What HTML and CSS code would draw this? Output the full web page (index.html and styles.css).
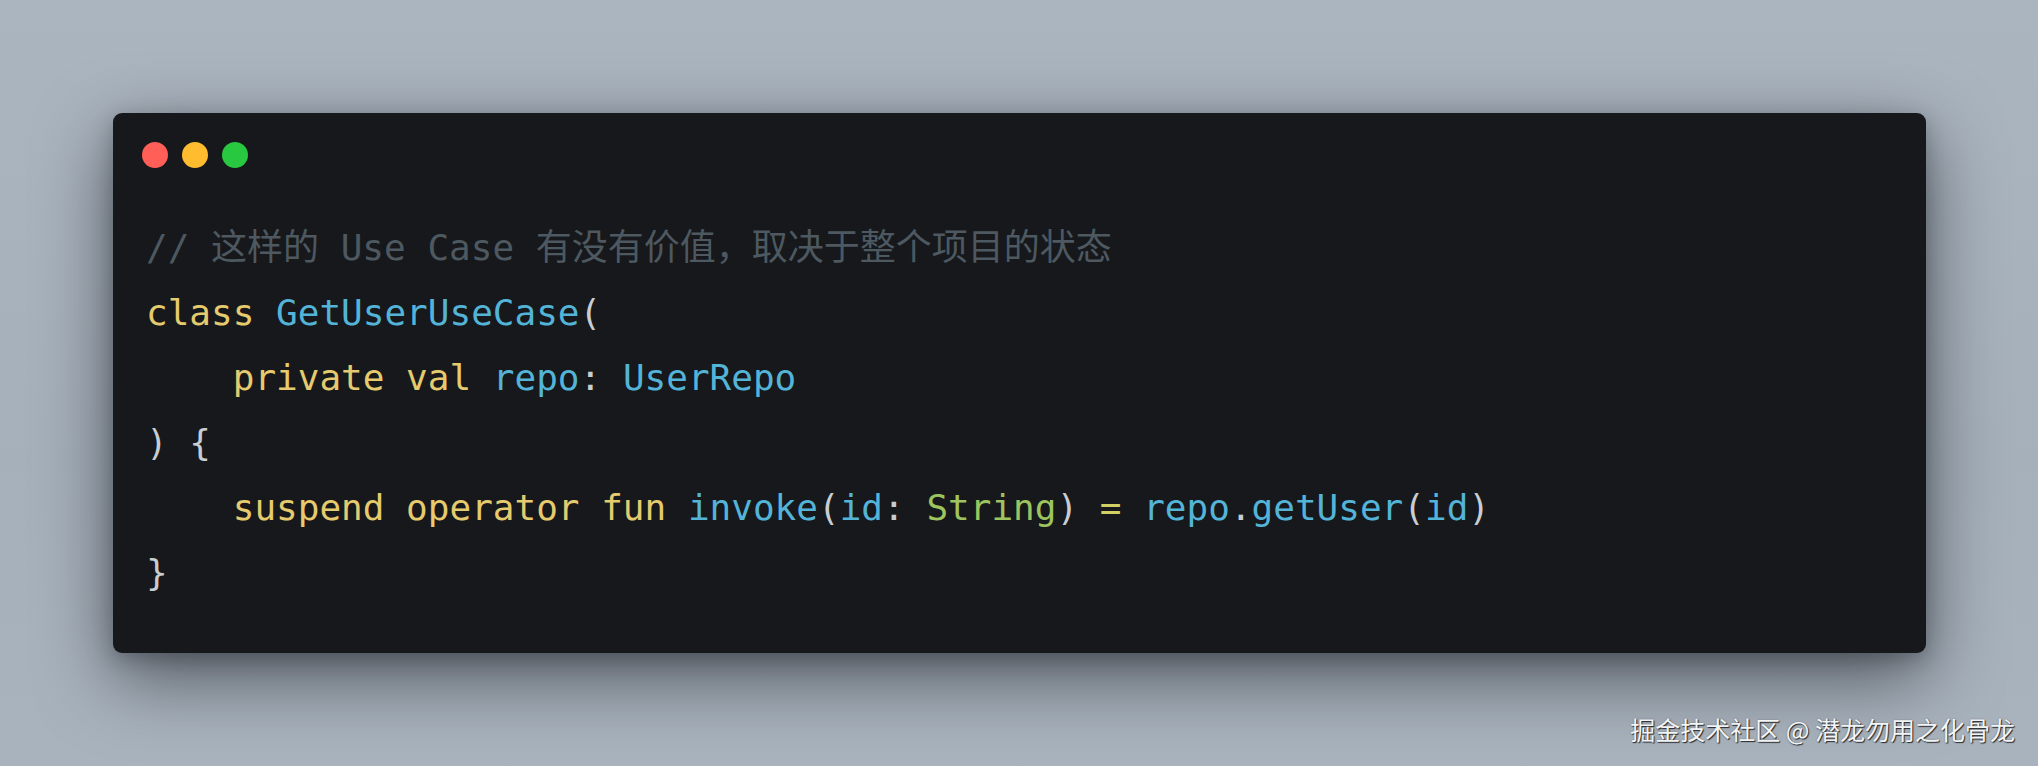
FILE: index.html
```html
<!DOCTYPE html>
<html lang="zh">
<head>
<meta charset="utf-8">
<title>GetUserUseCase</title>
<link rel="stylesheet" href="styles.css">
</head>
<body>
<main class="stage">
  <section class="window">
    <div class="titlebar">
      <span class="dot dot-red"></span>
      <span class="dot dot-yellow"></span>
      <span class="dot dot-green"></span>
    </div>
    <pre class="code"><code><span class="line"><span class="c">// 这样的 Use Case 有没有价值，取决于整个项目的状态</span></span>
<span class="line"><span class="k">class</span> <span class="t">GetUserUseCase</span><span class="p">(</span></span>
<span class="line">    <span class="k">private</span> <span class="k">val</span> <span class="t">repo</span><span class="p">:</span> <span class="t">UserRepo</span></span>
<span class="line"><span class="p">) {</span></span>
<span class="line">    <span class="k">suspend</span> <span class="k">operator</span> <span class="k">fun</span> <span class="t">invoke</span><span class="p">(</span><span class="t">id</span><span class="p">:</span> <span class="s">String</span><span class="p">)</span> <span class="o">=</span> <span class="t">repo</span><span class="p">.</span><span class="t">getUser</span><span class="p">(</span><span class="t">id</span><span class="p">)</span></span>
<span class="line"><span class="p">}</span></span></code></pre>
  </section>
  <div class="watermark">掘金技术社区 @ 潜龙勿用之化骨龙</div>
</main>
</body>
</html>
```

FILE: styles.css
```css
html, body {
  margin: 0;
  padding: 0;
  width: 2038px;
  height: 766px;
  overflow: hidden;
}

body {
  background: #aab4be;
}

.stage {
  position: relative;
  box-sizing: border-box;
  width: 2038px;
  height: 766px;
  padding: 113px 112px 0 113px;
  background: linear-gradient(180deg, #abb5bf 0%, #a6b0ba 60%, #a9b3bd 100%);
}

.window {
  box-sizing: border-box;
  width: 1813px;
  height: 540px;
  background: #16181b;
  border-radius: 9px;
  box-shadow: 0 24px 72px rgba(20, 24, 30, 0.6), 0 6px 20px rgba(20, 24, 30, 0.25);
  padding: 29px 33px 0 29px;
  display: flex;
  flex-direction: column;
}

.titlebar {
  display: flex;
  gap: 14px;
  height: 26px;
}

.dot {
  width: 26px;
  height: 26px;
  border-radius: 50%;
}

.dot-red { background: #ff5f57; }
.dot-yellow { background: #febc2e; }
.dot-green { background: #28c840; }

.code {
  margin: 47px 0 0 4px;
  font-family: "DejaVu Sans Mono", "Noto Sans CJK SC", monospace;
  font-size: 36px;
  line-height: 65px;
  color: #c9cdd1;
  white-space: pre;
}

.code code {
  font-family: inherit;
}

.c { color: #4d5861; }
.k { color: #e5cb6e; }
.t { color: #54b4d8; }
.s { color: #9dc45e; }
.p { color: #c9cdd1; }
.o { color: #d2cf63; }

.watermark {
  position: absolute;
  right: 23px;
  bottom: 22px;
  font-family: "Noto Sans CJK SC", sans-serif;
  font-size: 25px;
  line-height: 30px;
  color: #f2f4f6;
  text-shadow: 1px 1px 1px rgba(0, 0, 0, 0.75), 0 0 2px rgba(0, 0, 0, 0.3);
}
```
